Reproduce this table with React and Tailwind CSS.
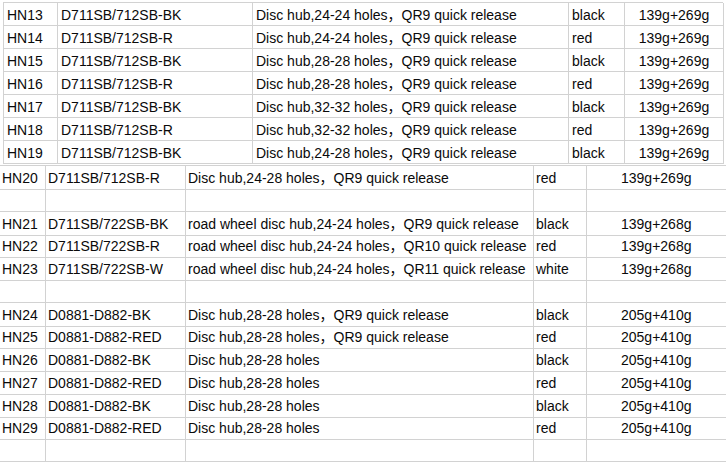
const topRows = [
  ['HN13', 'D711SB/712SB-BK', 'Disc hub,24-24 holes，QR9 quick release', 'black', '139g+269g'],
  ['HN14', 'D711SB/712SB-R', 'Disc hub,24-24 holes，QR9 quick release', 'red', '139g+269g'],
  ['HN15', 'D711SB/712SB-BK', 'Disc hub,28-28 holes，QR9 quick release', 'black', '139g+269g'],
  ['HN16', 'D711SB/712SB-R', 'Disc hub,28-28 holes，QR9 quick release', 'red', '139g+269g'],
  ['HN17', 'D711SB/712SB-BK', 'Disc hub,32-32 holes，QR9 quick release', 'black', '139g+269g'],
  ['HN18', 'D711SB/712SB-R', 'Disc hub,32-32 holes，QR9 quick release', 'red', '139g+269g'],
  ['HN19', 'D711SB/712SB-BK', 'Disc hub,24-28 holes，QR9 quick release', 'black', '139g+269g'],
];

const bottomRows = [
  ['HN20', 'D711SB/712SB-R', 'Disc hub,24-28 holes，QR9 quick release', 'red', '139g+269g'],
  ['', '', '', '', ''],
  ['HN21', 'D711SB/722SB-BK', 'road wheel disc hub,24-24 holes，QR9 quick release', 'black', '139g+268g'],
  ['HN22', 'D711SB/722SB-R', 'road wheel disc hub,24-24 holes，QR10 quick release', 'red', '139g+268g'],
  ['HN23', 'D711SB/722SB-W', 'road wheel disc hub,24-24 holes，QR11 quick release', 'white', '139g+268g'],
  ['', '', '', '', ''],
  ['HN24', 'D0881-D882-BK', 'Disc hub,28-28 holes，QR9 quick release', 'black', '205g+410g'],
  ['HN25', 'D0881-D882-RED', 'Disc hub,28-28 holes，QR9 quick release', 'red', '205g+410g'],
  ['HN26', 'D0881-D882-BK', 'Disc hub,28-28 holes', 'black', '205g+410g'],
  ['HN27', 'D0881-D882-RED', 'Disc hub,28-28 holes', 'red', '205g+410g'],
  ['HN28', 'D0881-D882-BK', 'Disc hub,28-28 holes', 'black', '205g+410g'],
  ['HN29', 'D0881-D882-RED', 'Disc hub,28-28 holes', 'red', '205g+410g'],
  ['', '', '', '', ''],
];

const font = { fontFamily: '"Liberation Sans", Arial, "Noto Sans CJK SC", sans-serif' };

function Cell({ children, center, pad }) {
  return (
    <div
      className={`flex items-center whitespace-nowrap overflow-hidden border-r border-b border-[#d2d2d2] pt-[2px] ${
        center ? 'justify-center' : pad
      }`}
    >
      {children}
    </div>
  );
}

export default function App() {
  return (
    <div className="w-[726px] h-[463px] overflow-hidden bg-white text-[14px] text-[#0a0a0a]" style={font}>
      {/* Upper sheet block */}
      <div className="ml-[3px] mt-[2px] w-[720px] border-l border-t border-[#d2d2d2]">
        {topRows.map((r, i) => (
          <div key={i} className="grid grid-cols-[54px_195px_316px_56px_99px] h-[23px]">
            <Cell pad="pl-[3px]">{r[0]}</Cell>
            <Cell pad="pl-[3px]">{r[1]}</Cell>
            <Cell pad="pl-[3px]">{r[2]}</Cell>
            <Cell pad="pl-[3px]">{r[3]}</Cell>
            <Cell center>{r[4]}</Cell>
          </div>
        ))}
      </div>

      {/* Lower sheet block */}
      <div className="mt-[1px] w-[760px] border-t border-[#d2d2d2]">
        {bottomRows.map((r, i) => (
          <div key={i} className="grid grid-cols-[46px_140px_348px_53px_173px] h-[22.75px]">
            <Cell pad="pl-[2px]">{r[0]}</Cell>
            <Cell pad="pl-[2px]">{r[1]}</Cell>
            <Cell pad="pl-[2px]">{r[2]}</Cell>
            <Cell pad="pl-[2px]">{r[3]}</Cell>
            <div className="flex items-center whitespace-nowrap border-r border-b border-[#d2d2d2] pt-[2px] pl-[34px]">
              {r[4]}
            </div>
          </div>
        ))}
      </div>
    </div>
  );
}
